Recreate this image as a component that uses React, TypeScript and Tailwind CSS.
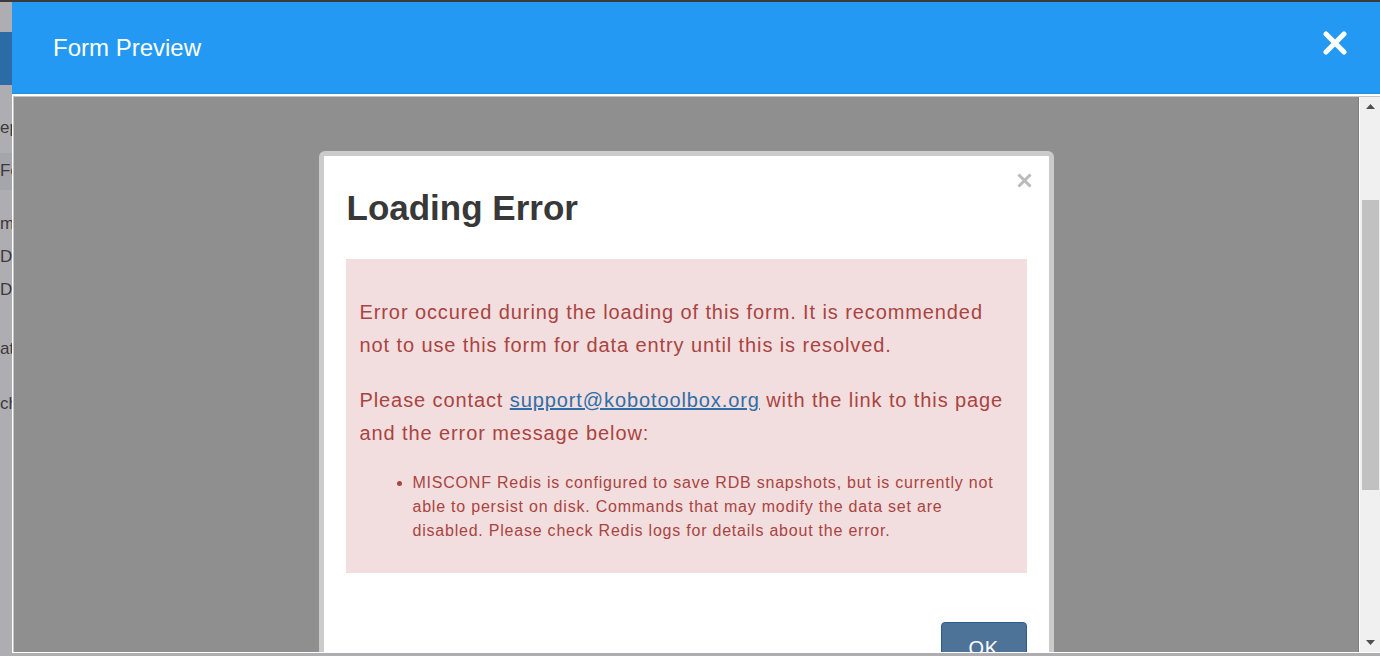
import React from "react";

const sideItems = [
  { text: "ep", mt: "mt-[33px]" },
  { text: "me", mt: "mt-[24px]" },
  { text: "Di", mt: "mt-[13px]" },
  { text: "Di", mt: "mt-[13px]" },
  { text: "at", mt: "mt-[39px]" },
  { text: "ch", mt: "mt-[35px]" },
];

/* ── Page behind the overlay (only a thin strip shows) ─────── */
function BackgroundPage() {
  return (
    <div className="flex h-full w-full flex-col bg-[#aeaeb2]">
      <div className="h-[2px] bg-[#3a3a3c]" />
      <div className="h-[30px]" />
      <div className="h-[53px] bg-[#2c6ca6]" />
      <div className="flex flex-col text-[17px] leading-[20px] text-[#3a3a3e]">
        <div className={sideItems[0].mt}>{sideItems[0].text}</div>
        <div className="mt-[15px] h-[37px] bg-[#a5a6ab] pt-[8px]">Fo</div>
        {sideItems.slice(1).map((it, i) => (
          <div key={i} className={it.mt}>
            {it.text}
          </div>
        ))}
      </div>
    </div>
  );
}

function Scrollbar() {
  return (
    <div className="flex w-[21px] flex-col items-center border-l border-white bg-[#f0f0f0]">
      <div className="flex h-[18px] items-center justify-center">
        <svg width="9" height="5" viewBox="0 0 9 5">
          <path d="M0 5 L4.5 0 L9 5 Z" fill="#505050" />
        </svg>
      </div>
      <div className="h-[85px]" />
      <div className="h-[290px] w-[17px] bg-[#c1c1c1]" />
      <div className="flex-1" />
      <div className="flex h-[20px] items-center justify-center">
        <svg width="9" height="5" viewBox="0 0 9 5">
          <path d="M0 0 L9 0 L4.5 5 Z" fill="#505050" />
        </svg>
      </div>
    </div>
  );
}

/* ── Dialog rendered inside the preview frame ─────────────── */
function LoadingErrorDialog() {
  return (
    <div className="relative mx-auto mt-[54px] w-[735px] shrink-0 rounded-[6px] border-[5px] border-[#cbcbcb] bg-white px-[22px] pt-[33px]">
      <button className="absolute right-[17px] top-[17px]">
        <svg width="15" height="15" viewBox="0 0 15 15">
          <path d="M1.5 1.5 L13.5 13.5 M13.5 1.5 L1.5 13.5" stroke="#bababa" strokeWidth="3" />
        </svg>
      </button>
      <h4 className="pl-[1px] text-[35px] font-bold leading-[38px] text-[#383838]">
        Loading Error
      </h4>

      <div className="mt-[32px] bg-[#f2dede] px-[14px] pb-[30px] pt-[37px] text-[#a94442]">
        <p className="text-[20px] leading-[33px] tracking-[0.9px]">
          Error occured during the loading of this form. It is recommended not to use this
          form for data entry until this is resolved.
        </p>
        <p className="mt-[22px] text-[20px] leading-[33px] tracking-[0.9px]">
          Please contact{" "}
          <a className="text-[#2f6ea6] underline">support@kobotoolbox.org</a> with the
          link to this page and the error message below:
        </p>
        <ul className="mt-[21px] list-disc pl-[53px] text-[16px] leading-[24px] tracking-[0.78px]">
          <li>
            MISCONF Redis is configured to save RDB snapshots, but is currently not able to
            persist on disk. Commands that may modify the data set are disabled. Please check
            Redis logs for details about the error.
          </li>
        </ul>
      </div>

      <div className="mt-[49px] flex justify-end">
        <button className="rounded-[4px] border border-[#2e5b87] bg-[#4e7399] px-[27px] py-[11px] text-[20px] leading-[28px] tracking-[0.5px] text-white">
          OK
        </button>
      </div>
    </div>
  );
}

export default function App() {
  return (
    <div className="relative h-[656px] w-[1380px] overflow-hidden font-['Liberation_Sans',Arial,sans-serif]">
      <BackgroundPage />

      {/* Form preview modal */}
      <div className="absolute bottom-[3px] left-[12px] right-0 top-[2px] flex flex-col bg-white">
        <div className="flex h-[92px] items-center justify-between border-b border-[#1e8ee4] bg-[#2399f3] pl-[41px] pr-[33px]">
          <span className="text-[24px] text-white">Form Preview</span>
          <button className="mb-[10px]">
            <svg width="24" height="24" viewBox="0 0 24 24">
              <path
                d="M3 3 L21 21 M21 3 L3 21"
                stroke="#ffffff"
                strokeWidth="5"
                strokeLinecap="round"
              />
            </svg>
          </button>
        </div>

        <div className="ml-[1px] mt-[2px] mb-[1px] flex min-h-0 flex-1 border-l border-t border-[#c4c4c4]">
          <div className="flex min-w-0 flex-1 flex-col overflow-hidden border-r border-[#7e7e7e] bg-[#8f8f8f]">
            <LoadingErrorDialog />
          </div>
          <Scrollbar />
        </div>
      </div>
    </div>
  );
}
